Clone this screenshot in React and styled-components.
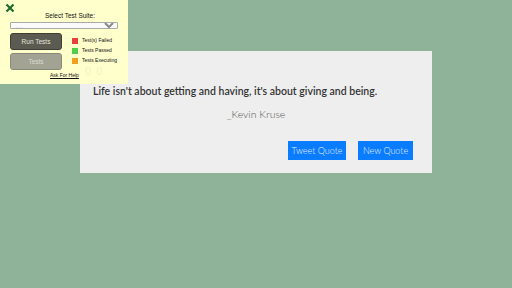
import React from "react";
import styled, { createGlobalStyle } from "styled-components";

const GlobalStyle = createGlobalStyle`
  html, body {
    margin: 0;
    padding: 0;
    background: #8fb398;
    width: 512px;
    height: 288px;
    overflow: hidden;
  }
`;

const legend = [
  { label: "Test(s) Failed", color: "#e8413a" },
  { label: "Tests Passed", color: "#4fd04a" },
  { label: "Tests Executing", color: "#f0a020" },
];

export default function App() {
  return (
    <Page>
      <GlobalStyle />
      <Card>
        <Quote>Life isn't about getting and having, it's about giving and being.</Quote>
        <Author>_Kevin Kruse</Author>
        <Actions>
          <QuoteButton $w={58}>Tweet Quote</QuoteButton>
          <QuoteButton $w={55}>New Quote</QuoteButton>
        </Actions>
      </Card>
      <TestPanel>
        <Close>
          <svg width="10" height="10" viewBox="0 0 10 10">
            <path d="M1.5 1.5 L8.5 8.5 M8.5 1.5 L1.5 8.5" stroke="#1e6b2a" strokeWidth="2.2" />
          </svg>
        </Close>
        <PanelTitle>Select Test Suite:</PanelTitle>
        <Select>
          <option>- - -</option>
        </Select>
        <PanelBody>
          <Buttons>
            <TestButton $dark>Run Tests</TestButton>
            <TestButton>Tests</TestButton>
          </Buttons>
          <Legend>
            {legend.map((item) => (
              <LegendRow key={item.label}>
                <Swatch style={{ background: item.color }} />
                {item.label}
              </LegendRow>
            ))}
            <Counts>
              <Count>0</Count>
              <Count>0</Count>
            </Counts>
          </Legend>
        </PanelBody>
        <HelpLink>Ask For Help</HelpLink>
      </TestPanel>
    </Page>
  );
}

const Page = styled.div`
  position: relative;
  width: 512px;
  height: 288px;
  padding-top: 51px;
  box-sizing: border-box;
  display: flex;
  justify-content: center;
  align-items: flex-start;
`;

const Card = styled.div`
  width: 352px;
  height: 122px;
  background: #eeeeee;
  box-sizing: border-box;
  padding: 33px 13px 0;
  display: flex;
  flex-direction: column;
`;

const Quote = styled.p`
  margin: 0;
  font-family: "Lato", sans-serif;
  font-weight: 600;
  font-size: 10.5px;
  line-height: 14px;
  white-space: nowrap;
  color: #333;
`;

const Author = styled.p`
  margin: 9px 0 0;
  text-align: center;
  font-family: "Lato", sans-serif;
  font-weight: 300;
  font-size: 10.5px;
  line-height: 14px;
  color: #555;
`;

const Actions = styled.div`
  display: flex;
  justify-content: flex-end;
  gap: 12px;
  margin-top: 20px;
  padding-right: 6px;
`;

const QuoteButton = styled.button`
  width: ${(p) => p.$w}px;
  height: 19px;
  padding: 0;
  border: none;
  background: #0a7cff;
  color: #e4efff;
  font-family: "Lato", sans-serif;
  font-weight: 300;
  font-size: 9px;
  white-space: nowrap;
`;

const TestPanel = styled.div`
  position: absolute;
  top: 0;
  left: 0;
  width: 128px;
  height: 84px;
  background: #ffffcc;
  box-sizing: border-box;
  padding: 14px 10px 0;
  font-family: "Liberation Sans", Arial, sans-serif;
  color: #111;
`;

const Close = styled.div`
  position: absolute;
  top: 3px;
  left: 5px;
  display: flex;
`;

const PanelTitle = styled.div`
  text-align: center;
  font-size: 6.5px;
  line-height: 4px;
  margin-left: 12px;
`;

const Select = styled.select`
  display: block;
  width: 108px;
  height: 7px;
  margin-top: 4px;
  padding: 0 1px;
  border: 1px solid #aaa;
  border-radius: 1px;
  background: #fafafa;
  font-size: 4px;
  line-height: 4px;
  color: #888;
`;

const PanelBody = styled.div`
  display: flex;
  gap: 10px;
  margin-top: 4px;
`;

const Buttons = styled.div`
  display: flex;
  flex-direction: column;
  gap: 3px;
`;

const TestButton = styled.button`
  width: 52px;
  height: 17px;
  border: 1px solid ${(p) => (p.$dark ? "#3e3e36" : "#8a8a7c")};
  border-radius: 3px;
  background: ${(p) => (p.$dark ? "#5b5b52" : "#a3a394")};
  color: ${(p) => (p.$dark ? "#e6e6dc" : "#dcdcd0")};
  font-family: "Liberation Sans", Arial, sans-serif;
  font-size: 6.5px;
  padding: 0;
`;

const Legend = styled.div`
  display: flex;
  flex-direction: column;
  gap: 3px;
  padding-top: 4px;
`;

const LegendRow = styled.div`
  display: flex;
  align-items: center;
  gap: 4px;
  font-size: 5px;
  line-height: 7px;
  white-space: nowrap;
`;

const Swatch = styled.span`
  width: 6px;
  height: 6px;
`;

const Counts = styled.div`
  display: flex;
  gap: 5px;
  margin: -1px 0 0 13px;
`;

const Count = styled.span`
  font-size: 11px;
  line-height: 11px;
  color: #f2f2bf;
`;

const HelpLink = styled.a`
  position: absolute;
  left: 50px;
  top: 72px;
  font-size: 5px;
  color: #111;
  text-decoration: underline;
`;
